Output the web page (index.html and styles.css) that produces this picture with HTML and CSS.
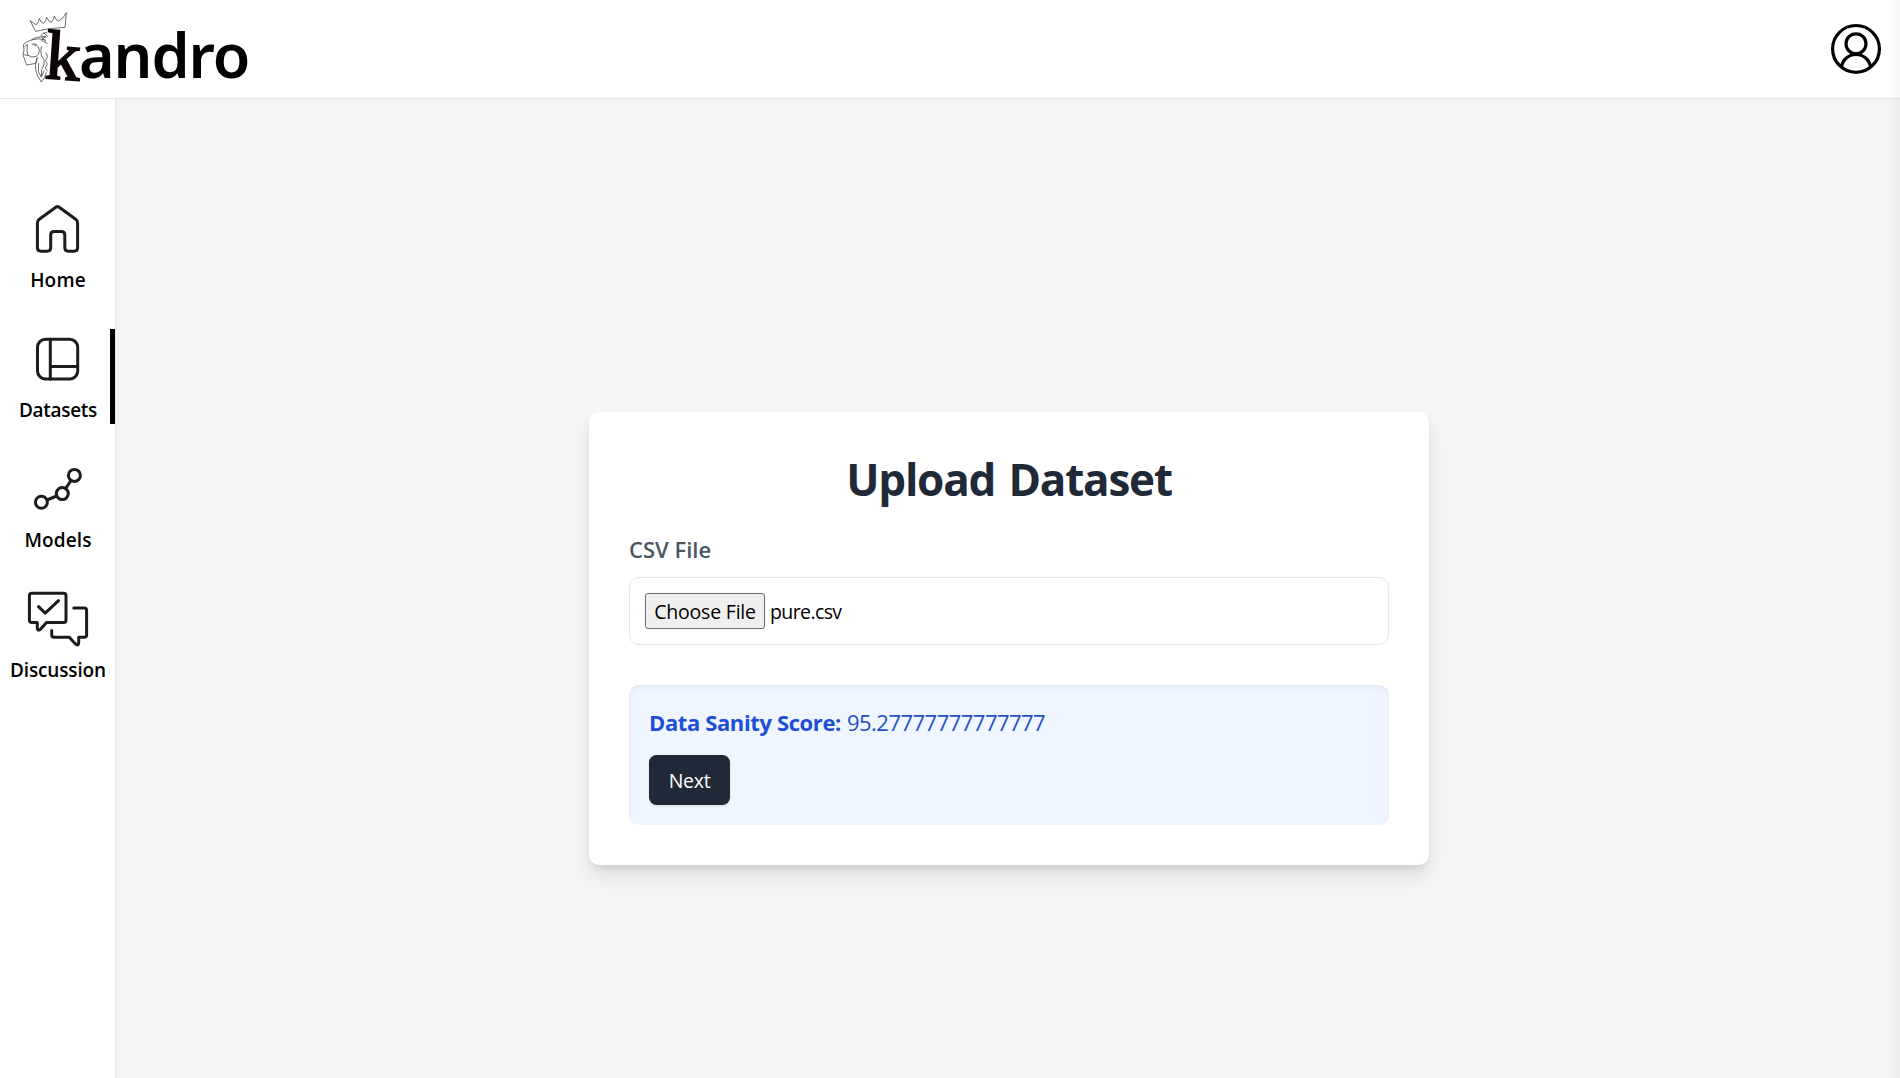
FILE: index.html
```html
<!DOCTYPE html>
<html lang="en">
<head>
<meta charset="utf-8">
<title>kandro</title>
<link rel="stylesheet" href="styles.css">
</head>
<body>
<header class="topbar">
  <div class="brand">
    <svg class="brand-mark" viewBox="0 0 210 255" aria-hidden="true">
      <g class="lion">
        <path d="M62 79 L45 47 Q57 56 64 59 Q72 51 73 40 Q77 54 86 55 Q94 48 95 37 Q101 51 109 52 Q117 44 118 33 Q122 47 131 48 Q146 40 154 23 L150 67 Q105 68 62 79 Z"/>
        <path d="M97 82 Q80 84 78 91 M88 96 Q60 95 49 105 Q28 111 25 120 L27 134 L24 150 L35 180 L63 175 L67 157 M28 126 L37 118 Q35 140 38 150 Q50 160 64 154 L71 147 Q76 134 69 124 M25 148 Q36 153 40 151 M49 105 Q72 98 92 105 M50 119 Q60 112 67 121 M56 119 L66 122 M78 92 L94 97 M86 83 L98 94 M81 99 L94 109 M94 91 L80 106 L98 116"/>
        <path d="M67 157 Q59 174 62 195 Q67 216 79 231 Q92 217 94 202 M92 143 L98 154 L92 167 L97 177 L91 189 L98 199 M79 124 Q74 153 87 163 Q91 177 80 194 L79 217 M71 174 L70 200 L79 216 L88 196"/>
      </g>
      <text class="initial" x="0" y="0" transform="translate(88 219) rotate(4)">k</text>
    </svg>
    <span class="wordmark">andro</span>
  </div>
  <svg class="avatar" viewBox="1830 23 52 52" aria-label="Account">
    <circle cx="1856" cy="48.9" r="23.4"/>
    <circle cx="1856" cy="43.8" r="10"/>
    <path d="M1841.6 66.8C1842.5 59.5 1848.5 54.5 1856 54.5S1869.500 59.500 1870.400 66.800"/>
  </svg>
</header>
<div class="shell">
  <nav class="sidebar">
    <a class="nav-item">
      <svg class="nav-icon" viewBox="28 199 60 60"><path d="M55.800 207.200 L39.300 219.300 Q37.400 220.700 37.400 223 V247.500 Q37.400 251.200 41 251.200 H47.200 Q50.700 251.200 50.700 247.500 V235 Q50.700 231.500 54.200 231.500 H61.300 Q64.800 231.500 64.800 235 V247.500 Q64.800 251.200 68.400 251.200 H74 Q77.600 251.200 77.600 247.500 V223 Q77.600 220.700 75.700 219.300 L59.200 207.200 Q57.500 206 55.800 207.200Z"/></svg>
      <span class="nav-label home">Home</span>
    </a>
    <a class="nav-item active">
      <svg class="nav-icon" viewBox="28 329 60 60"><rect x="37.500" y="339.300" width="40.200" height="39.700" rx="8"/><path d="M50.300 339.300V379M50.300 366.400H77.700"/></svg>
      <span class="nav-label datasets">Datasets</span>
    </a>
    <a class="nav-item">
      <svg class="nav-icon" viewBox="28 459 60 60"><circle cx="41.400" cy="502.300" r="6"/><circle cx="62.300" cy="493.600" r="6"/><circle cx="74.400" cy="475.400" r="6"/><path d="M47 500L56.700 496M65.700 488.500L71 480.500"/></svg>
      <span class="nav-label models">Models</span>
    </a>
    <a class="nav-item">
      <svg class="nav-icon" viewBox="28 589 60 60"><path d="M31.500 593.200H63.600Q66 593.200 66 595.600V620Q66 622.400 63.600 622.400H46.500L40.500 629.200Q37.300 631.500 37.300 628V622.400H31.800Q29.400 622.400 29.400 620V595.600Q29.400 593.200 31.800 593.200ZM38.500 606.700L45.200 613.200L58.500 600.700M73.800 608.100H84.200Q86.600 608.100 86.600 610.500V634.800Q86.600 637.200 84.200 637.200H78.700V642.600Q78.700 646.300 75.500 644L69.300 637.200H54.100Q51.700 637.200 51.700 634.800V630.500"/></svg>
      <span class="nav-label discussion">Discussion</span>
    </a>
  </nav>
  <main class="content">
    <section class="card">
      <h1 class="title">Upload Dataset</h1>
      <div class="field-label"><span>CSV File</span></div>
      <div class="file-field">
        <button class="choose">Choose File</button>
        <span class="file-name">pure.csv</span>
      </div>
      <div class="result">
        <p class="score"><strong class="score-label">Data Sanity Score:</strong><span class="score-value">95.27777777777777</span></p>
        <button class="next">Next</button>
      </div>
    </section>
  </main>
</div>
</body>
</html>
```
FILE: styles.css
```css
* { box-sizing: border-box; }
body {
  margin: 0;
  height: 1078px;
  display: flex;
  flex-direction: column;
  overflow: hidden;
  background: #fff;
  color: #000;
  font-family: "Open Sans", "Noto Sans", sans-serif;
  font-size: 19.5px;
}
/* soft shade along the window's right edge */
body::after {
  content: "";
  position: absolute;
  top: 0;
  right: 0;
  width: 12px;
  height: 1078px;
  background: linear-gradient(to right, transparent, rgba(0,0,0,.03));
}
.topbar {
  height: 99px;
  flex: none;
  display: flex;
  justify-content: space-between;
  align-items: flex-start;
  padding: 5px 18px 0 15px;
  border-bottom: 1px solid #e5e7eb;
}
.brand { display: flex; }
.brand-mark { width: 70px; height: 85px; overflow: visible; }
.lion { fill: none; stroke: #4a4a4a; stroke-width: 2.4; stroke-linejoin: round; }
.initial { font: 209px "Liberation Serif", serif; fill: #0b0506; stroke: #0b0506; stroke-width: 6px; }
.wordmark {
  margin-left: -6px;
  padding-top: 8px;
  line-height: 84px;
  font-family: "Noto Sans", sans-serif;
  font-size: 61px;
  font-weight: 580;
  letter-spacing: -1.1px;
}
.avatar { width: 52px; height: 52px; margin-top: 18px; fill: none; stroke: #000; stroke-width: 3.2; }
.shell { flex: 1; display: flex; min-height: 0; }
.sidebar {
  width: 116px;
  flex: none;
  display: flex;
  flex-direction: column;
  gap: 35px;
  padding-top: 100px;
  border-right: 1px solid #e5e7eb;
}
.nav-item {
  height: 95px;
  display: flex;
  flex-direction: column;
  align-items: center;
  border-right: 5px solid transparent;
  padding-left: 5px;
}
.nav-item.active { border-right-color: #000; }
.nav-icon {
  width: 60px;
  height: 60px;
  flex: none;
  overflow: visible;
  fill: none;
  stroke: #1c1c1c;
  stroke-width: 3;
  stroke-linejoin: round;
  stroke-linecap: round;
}
.nav-label { line-height: 28px; padding: 7px 0 0 1px; font-size: 19px; font-weight: 570; white-space: nowrap; }
.home { letter-spacing: .2px; }
.datasets { letter-spacing: -.3px; }
.models { letter-spacing: .1px; }
.discussion { letter-spacing: -.15px; }
.content { flex: 1; display: flex; align-items: flex-start; justify-content: center; padding: 313px 0 0 2px; background: #f3f4f6; }
.card {
  width: 840px;
  height: 453px;
  padding: 40px;
  display: flex;
  flex-direction: column;
  background: #fff;
  border-radius: 10px;
  box-shadow: 0 12.5px 18.75px -3.75px rgba(0,0,0,.1), 0 5px 7.5px -2.5px rgba(0,0,0,.08);
}
.title { margin: -1px 0 21px; line-height: 56px; text-align: center; font-size: 44px; font-weight: 700; letter-spacing: -1.2px; word-spacing: 3px; color: #1f2937; }
.field-label { height: 40px; padding-top: 4px; line-height: 35px; font-size: 22px; font-weight: 580; color: #4b5563; }
.file-field {
  height: 68px;
  margin-top: 9px;
  padding: 15px;
  display: flex;
  align-items: center;
  gap: 5px;
  border: 1px solid #e5e7eb;
  border-radius: 10px;
}
.choose {
  width: 120px;
  height: 36px;
  padding: 0;
  border: 1px solid #6b6b6b;
  border-radius: 3px;
  background: #efefef;
  color: #000;
  font: inherit;
  letter-spacing: -.2px;
  white-space: nowrap;
}
.file-name { letter-spacing: -.6px; }
.result {
  height: 140px;
  margin-top: 40px;
  padding: 20px;
  border-radius: 10px;
  background: #eff6ff;
  box-shadow: inset 0 2.5px 5px rgba(0,0,0,.06);
}
.score { margin: 0 0 15px; height: 35px; line-height: 35px; display: flex; gap: 6px; color: #1d4ed8; font-size: 22px; white-space: nowrap; }
.score-label { font-weight: 700; letter-spacing: -.38px; }
.score-value { color: #2450c4; font-weight: 400; letter-spacing: -.52px; }
.next {
  width: 81px;
  height: 50px;
  padding: 0;
  border: 0;
  border-radius: 7.5px;
  background: #1f2937;
  color: #fff;
  font: inherit;
  letter-spacing: -.3px;
  box-shadow: 0 1px 3px rgba(0,0,0,.1);
}
```
